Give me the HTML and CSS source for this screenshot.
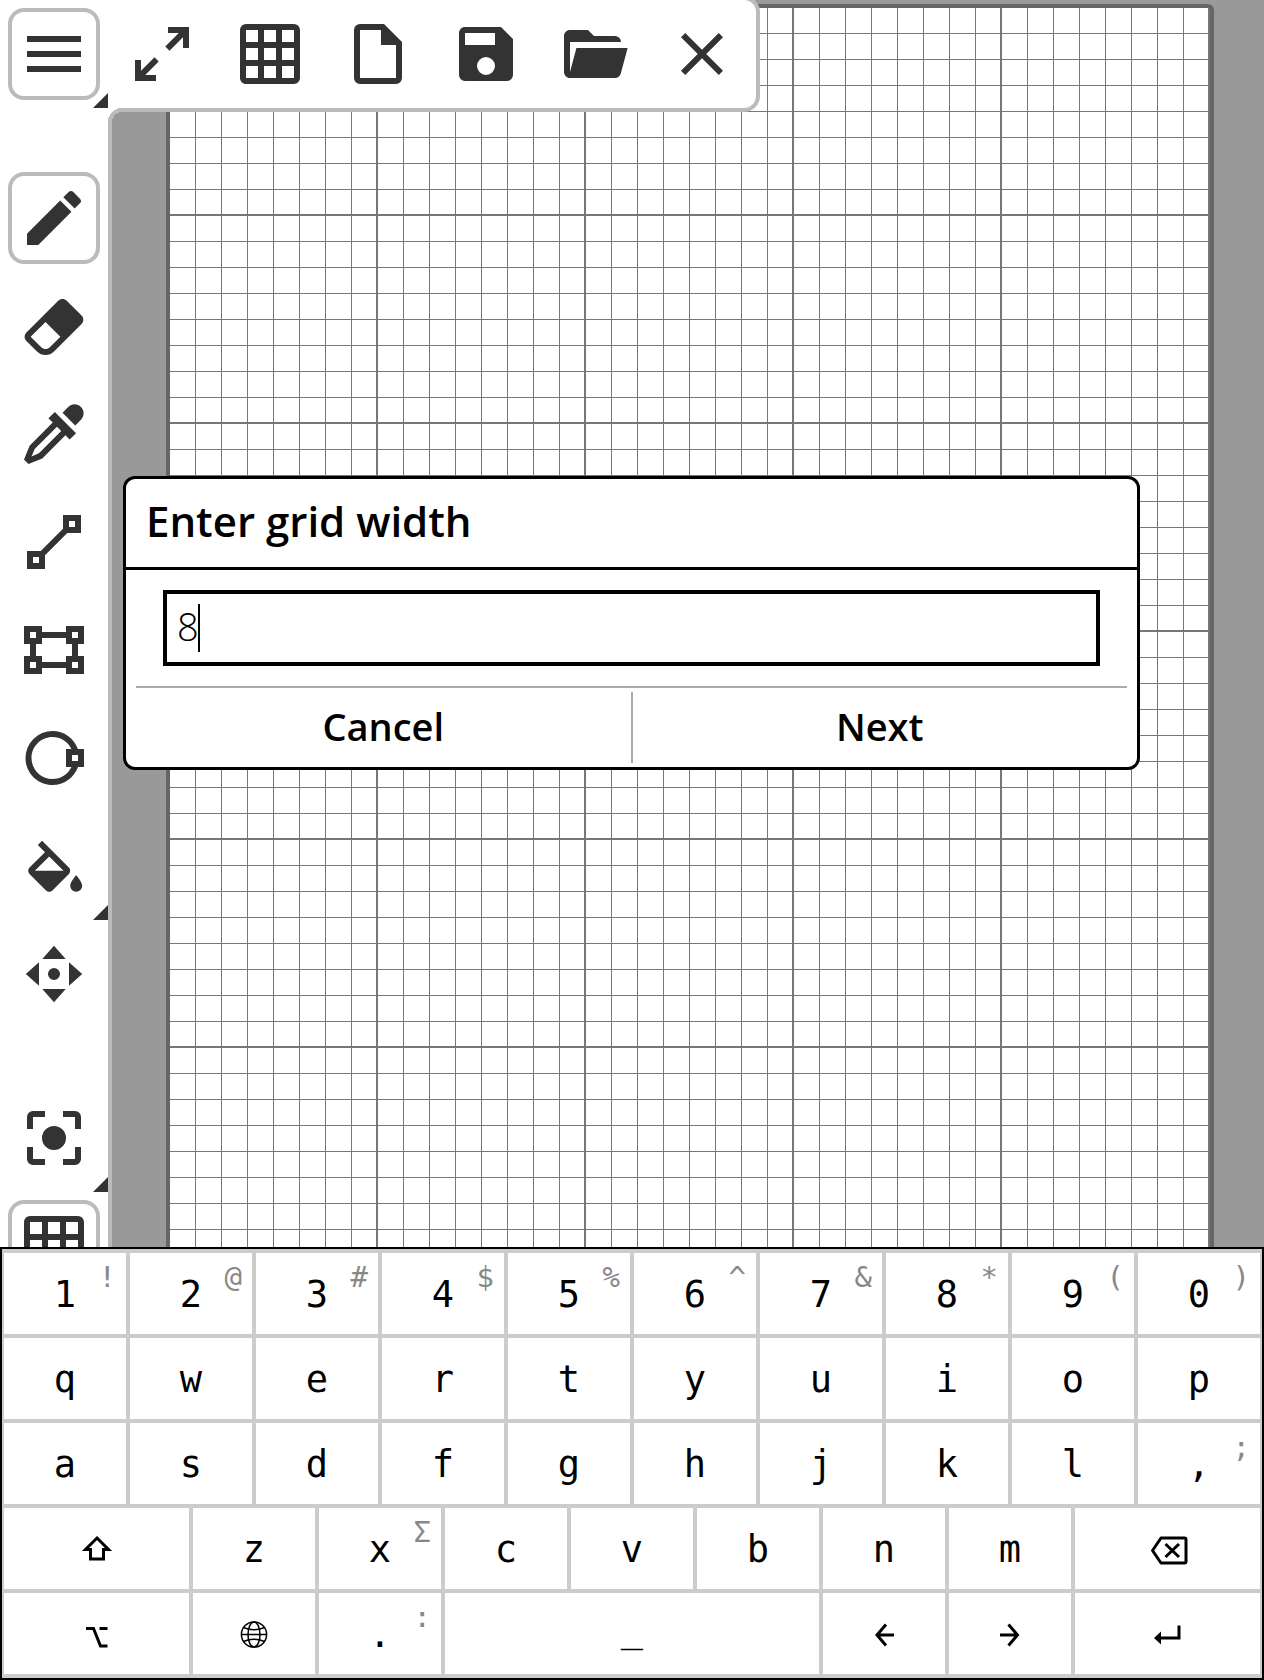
FILE: index.html
```html
<!DOCTYPE html>
<html lang="en">
<head>
<meta charset="utf-8">
<meta name="viewport" content="width=device-width, initial-scale=1">
<title>Pixel editor</title>
<link rel="stylesheet" href="styles.css">
</head>
<body>
<div class="app">
  <main class="workspace">
    <nav class="sidebar" aria-label="Tools">
      <button class="tool boxed more" aria-label="Menu"><svg class="icon" viewBox="0 0 24 24"><path d="M3,6H21V8H3V6M3,11H21V13H3V11M3,16H21V18H3V16Z"/></svg></button>
      <div class="group">
        <button class="tool boxed" aria-label="Pencil"><svg class="icon" viewBox="0 0 24 24"><path d="M20.71,7.04C21.1,6.65 21.1,6 20.71,5.63L18.37,3.29C18,2.9 17.35,2.9 16.96,3.29L15.12,5.12L18.87,8.87M3,17.25V21H6.75L17.81,9.93L14.06,6.18L3,17.25Z"/></svg></button>
        <button class="tool" aria-label="Eraser"><svg class="icon" viewBox="0 0 24 24"><path d="M16.24,3.56L21.19,8.5C21.97,9.29 21.97,10.55 21.19,11.34L12,20.53C10.44,22.09 7.91,22.09 6.34,20.53L2.81,17C2.03,16.21 2.03,14.95 2.81,14.16L13.41,3.56C14.2,2.78 15.46,2.78 16.24,3.56M4.22,15.58L7.76,19.11C8.54,19.9 9.8,19.9 10.59,19.11L14.12,15.58L9.17,10.63L4.22,15.58Z"/></svg></button>
        <button class="tool" aria-label="Colour picker"><svg class="icon" viewBox="0 0 24 24"><path d="M19.35,11.72L17.22,13.85L15.81,12.43L8.1,20.14L3.5,22L2,20.5L3.86,15.9L11.57,8.19L10.15,6.78L12.28,4.65L19.35,11.72M16.76,3C17.93,1.83 19.83,1.83 21,3C22.17,4.17 22.17,6.07 21,7.24L19.08,9.16L14.84,4.92L16.76,3M5.56,17.03L4.5,19.5L6.97,18.44L14.4,11L13,9.6L5.56,17.03Z"/></svg></button>
        <button class="tool" aria-label="Line"><svg class="icon" viewBox="0 0 24 24"><path d="M15,3V7.59L7.59,15H3V21H9V16.42L16.42,9H21V3M17,5H19V7H17M5,17H7V19H5"/></svg></button>
        <button class="tool" aria-label="Rectangle"><svg class="icon" viewBox="0 0 24 24"><path d="M2,4H8V6H16V4H22V10H20V14H22V20H16V18H8V20H2V14H4V10H2V4M16,10V8H8V10H6V14H8V16H16V14H18V10H16M4,6V8H6V6H4M18,6V8H20V6H18M4,16V18H6V16H4M18,16V18H20V16H18Z"/></svg></button>
        <button class="tool" aria-label="Circle"><svg class="icon" viewBox="0 0 24 24"><path d="M22,9H19.97C18.7,5.41 15.31,3 11.5,3A9,9 0 0,0 2.5,12C2.5,17 6.53,21 11.5,21C15.31,21 18.7,18.6 20,15H22M20,11V13H18V11M17.82,15C16.66,17.44 14.2,19 11.5,19C7.64,19 4.5,15.87 4.5,12C4.5,8.14 7.64,5 11.5,5C14.2,5 16.66,6.57 17.81,9H16V15"/></svg></button>
        <button class="tool more" aria-label="Fill"><svg class="icon" viewBox="0 0 24 24"><path transform="translate(.4 3.6)" d="M19,11.5C19,11.5 17,13.67 17,15A2,2 0 0,0 19,17A2,2 0 0,0 21,15C21,13.67 19,11.5 19,11.5M5.21,10L10,5.21L14.79,10M16.56,8.94L7.62,0L6.21,1.41L8.59,3.79L3.44,8.94C2.85,9.5 2.85,10.47 3.44,11.06L8.94,16.56C9.23,16.85 9.62,17 10,17C10.38,17 10.77,16.85 11.06,16.56L16.56,11.06C17.15,10.47 17.15,9.5 16.56,8.94Z"/></svg></button>
        <button class="tool" aria-label="Move"><svg class="icon" viewBox="0 0 24 24"><path d="M12,2.6L15.9,7H8.1ZM12,21.4L8.1,17H15.9ZM2.6,12L7,8.1V15.9ZM21.4,12L17,15.9V8.1ZM12,10A2,2 0 0,1 12,14A2,2 0 0,1 12,10Z"/></svg></button>
      </div>
      <div class="group">
        <button class="tool more" aria-label="Centre view"><svg class="icon" viewBox="0 0 24 24"><path d="M12,8A4,4 0 0,1 12,16A4,4 0 0,1 12,8M5,15H3V19A2,2 0 0,0 5,21H9V19H5M5,5H9V3H5A2,2 0 0,0 3,5V9H5M19,3H15V5H19V9H21V5A2,2 0 0,0 19,3M19,19H15V21H19A2,2 0 0,0 21,19V15H19"/></svg></button>
        <button class="tool boxed" aria-label="Show grid"><svg class="icon" viewBox="0 0 24 24"><path d="M10,4V8H14V4H10M16,4V8H20V4H16M16,10V14H20V10H16M16,16V20H20V16H16M14,20V16H10V20H14M8,20V16H4V20H8M8,14V10H4V14H8M8,8V4H4V8H8M10,14H14V10H10V14M4,2H20A2,2 0 0,1 22,4V20A2,2 0 0,1 20,22H4C2.92,22 2,21.1 2,20V4A2,2 0 0,1 4,2Z"/></svg></button>
      </div>
    </nav>
    <section class="stage" aria-label="Canvas"><div class="sheet"></div></section>

    <div class="toolbar" role="toolbar" aria-label="File">
      <button class="tool" aria-label="Resize"><svg class="icon" viewBox="0 0 24 24"><path d="M10,21V19H6.41L10.91,14.5L9.5,13.09L5,17.59V14H3V21H10M14.5,10.91L19,6.41V10H21V3H14V5H17.59L13.09,9.5L14.5,10.91Z"/></svg></button>
      <button class="tool" aria-label="Grid size"><svg class="icon" viewBox="0 0 24 24"><path d="M10,4V8H14V4H10M16,4V8H20V4H16M16,10V14H20V10H16M16,16V20H20V16H16M14,20V16H10V20H14M8,20V16H4V20H8M8,14V10H4V14H8M8,8V4H4V8H8M10,14H14V10H10V14M4,2H20A2,2 0 0,1 22,4V20A2,2 0 0,1 20,22H4C2.92,22 2,21.1 2,20V4A2,2 0 0,1 4,2Z"/></svg></button>
      <button class="tool" aria-label="New"><svg class="icon" viewBox="0 0 24 24"><path d="M6,2A2,2 0 0,0 4,4V20A2,2 0 0,0 6,22H18A2,2 0 0,0 20,20V8L14,2H6M6,4H13V9H18V20H6V4Z"/></svg></button>
      <button class="tool" aria-label="Save"><svg class="icon" viewBox="0 0 24 24"><path d="M15,9H5V5H15M12,19A3,3 0 0,1 9,16A3,3 0 0,1 12,13A3,3 0 0,1 15,16A3,3 0 0,1 12,19M17,3H5C3.89,3 3,3.9 3,5V19A2,2 0 0,0 5,21H19A2,2 0 0,0 21,19V7L17,3Z"/></svg></button>
      <button class="tool" aria-label="Open"><svg class="icon" viewBox="0 0 24 24"><path d="M19,20H4C2.89,20 2,19.1 2,18V6C2,4.89 2.89,4 4,4H10L12,6H19A2,2 0 0,1 21,8H21L4,8V18L6.14,10H23.21L20.93,18.5C20.7,19.37 19.92,20 19,20Z"/></svg></button>
      <button class="tool" aria-label="Close"><svg class="icon" viewBox="0 0 24 24"><path d="M19,6.41L17.59,5L12,10.59L6.41,5L5,6.41L10.59,12L5,17.59L6.41,19L12,13.41L17.59,19L19,17.59L13.41,12L19,6.41Z"/></svg></button>
    </div>

    <div class="overlay">
      <form class="prompt" role="dialog" aria-labelledby="prompt-title">
        <h1 class="prompt-title"><label id="prompt-title" for="grid-width">Enter grid width</label></h1>
        <div class="field">
          <input class="field-input" id="grid-width" type="text" inputmode="numeric" value="8">
          <span class="caret"></span>
        </div>
        <div class="actions">
          <button class="action" type="button">Cancel</button>
          <button class="action" type="button">Next</button>
        </div>
      </form>
    </div>
  </main>

  <section class="keyboard" aria-label="Keyboard">
    <button class="key">1<span class="hint">!</span></button>
    <button class="key">2<span class="hint">@</span></button>
    <button class="key">3<span class="hint">#</span></button>
    <button class="key">4<span class="hint">$</span></button>
    <button class="key">5<span class="hint">%</span></button>
    <button class="key">6<span class="hint">^</span></button>
    <button class="key">7<span class="hint">&amp;</span></button>
    <button class="key">8<span class="hint">*</span></button>
    <button class="key">9<span class="hint">(</span></button>
    <button class="key">0<span class="hint">)</span></button>
    <button class="key">q</button>
    <button class="key">w</button>
    <button class="key">e</button>
    <button class="key">r</button>
    <button class="key">t</button>
    <button class="key">y</button>
    <button class="key">u</button>
    <button class="key">i</button>
    <button class="key">o</button>
    <button class="key">p</button>
    <button class="key">a</button>
    <button class="key">s</button>
    <button class="key">d</button>
    <button class="key">f</button>
    <button class="key">g</button>
    <button class="key">h</button>
    <button class="key">j</button>
    <button class="key">k</button>
    <button class="key">l</button>
    <button class="key">,<span class="hint">;</span></button>
    <button class="key wide" aria-label="Shift"><svg class="glyph" viewBox="0 0 40 40"><path d="M20 9L31.5 20.5H26.5V30H13.5V20.5H8.5Z"/></svg></button>
    <button class="key">z</button>
    <button class="key">x<span class="hint">Σ</span></button>
    <button class="key">c</button>
    <button class="key">v</button>
    <button class="key">b</button>
    <button class="key">n</button>
    <button class="key">m</button>
    <button class="key wide" aria-label="Backspace"><svg class="glyph" viewBox="0 0 40 40"><path stroke-linejoin="round" d="M13 9H36.5Q38 9 38 10.500V32.500Q38 34 36.500 34H13L4.500 21.500ZM17.500 15L31 28M31 15L17.500 28"/></svg></button>
    <button class="key wide" aria-label="Option"><svg class="glyph" viewBox="0 0 40 40"><path d="M9 14.500H16.500L23.500 32H30.500M22.500 14.500H30.500"/></svg></button>
    <button class="key" aria-label="Language"><svg class="glyph thin" viewBox="0 0 40 40"><circle cx="20" cy="20.500" r="12.600"/><ellipse cx="20" cy="20.500" rx="6" ry="12.600"/><path d="M7 20.500H33M9.500 13.500Q20 18 30.500 13.500M9.500 27.500Q20 23 30.500 27.500"/></svg></button>
    <button class="key">.<span class="hint">:</span></button>
    <button class="key space" aria-label="Space">_</button>
    <button class="key" aria-label="Left"><svg class="glyph" viewBox="0 0 40 40"><path d="M30 21H13M22 10.500L13 21L22 31.500"/></svg></button>
    <button class="key" aria-label="Right"><svg class="glyph" viewBox="0 0 40 40"><path d="M10 21H27M18.500 10.500L27.500 21L18.500 31.500"/></svg></button>
    <button class="key wide" aria-label="Enter"><svg class="glyph" viewBox="0 0 40 40"><path d="M31 11.500V24H11"/><path class="solid" d="M6 24L13 17.500V30.500Z"/></svg></button>
  </section>
</div>
</body>
</html>
```
FILE: styles.css
```css
* {
  box-sizing: border-box;
}

body {
  margin: 0;
  font-family: "Open Sans", Lato, sans-serif;
  color: #000;
  background: #fff;
}

button {
  margin: 0;
  padding: 0;
  border: 0;
  border-radius: 0;
  background: #fff;
  color: inherit;
  font: inherit;
}

.app {
  display: flex;
  flex-direction: column;
  height: 100vh;
}

.workspace {
  position: relative;
  display: flex;
  flex: 1;
  min-height: 0;
  overflow: hidden;
}

/* Tools */
.sidebar {
  display: flex;
  flex-direction: column;
  flex: none;
  gap: 56px;
  border-right: 4px solid #bbb;
  background: #fff;
}

.group {
  display: flex;
  flex-direction: column;
}

.tool {
  position: relative;
  display: grid;
  place-items: center;
  flex: none;
  width: 108px;
  height: 108px;
  background: transparent;
}

.boxed::before {
  content: "";
  position: absolute;
  inset: 8px;
  border: 4px solid #bbb;
  border-radius: 16px;
}

.more::after {
  content: "";
  position: absolute;
  right: 0;
  bottom: 0;
  width: 15px;
  height: 15px;
  background: #333;
  clip-path: polygon(100% 0, 100% 100%, 0 100%);
}

.icon {
  width: 72px;
  height: 72px;
  fill: #333;
  fill-rule: evenodd;
}

.toolbar {
  position: absolute;
  top: -4px;
  left: 108px;
  display: flex;
  border: 4px solid #bbb;
  border-left: 0;
  border-radius: 0 16px 16px 0;
  background: #fff;
}

/* Concave corner where the toolbar meets the sidebar */
.toolbar::after {
  content: "";
  position: absolute;
  left: 0;
  top: 108px;
  width: 14px;
  height: 14px;
  background: radial-gradient(circle at 100% 100%, transparent 10px, #bbb 10px 14px, #fff 14px);
}

.stage {
  display: flex;
  flex: 1;
  padding: 4px 50px 0 54px;
  background: #999;
}

.sheet {
  flex: 1;
  border: 4px solid #666;
  border-bottom: 0;
  border-radius: 6px 6px 0 0;
  background-color: #fff;
  background-image:
    linear-gradient(to right, transparent 206px, #777 206px),
    linear-gradient(to bottom, transparent 206px, #777 206px),
    linear-gradient(to right, transparent 25px, #777 25px),
    linear-gradient(to bottom, transparent 25px, #777 25px);
  background-size: 208px 208px, 208px 208px, 26px 26px, 26px 26px;
}

/* Prompt */
.overlay {
  position: absolute;
  inset: 0;
  display: grid;
  align-items: center;
  padding: 0 124px 1px 123px;
}

.prompt {
  border: 3px solid #000;
  border-radius: 12px;
  background: #fff;
}

.prompt-title {
  margin: 0;
  padding: 18px 20px 22px;
  border-bottom: 3px solid #000;
  font-size: 42px;
  line-height: 48px;
  font-weight: 600;
}

.field {
  position: relative;
  margin: 20px 37px;
}

.field-input {
  display: block;
  width: 100%;
  height: 76px;
  padding: 0 10px 4px;
  border: 4px solid #000;
  border-radius: 0;
  outline: 0;
  background: #fff;
  color: #000;
  font: 300 38px/48px "Open Sans", sans-serif;
}

.caret {
  position: absolute;
  left: 35px;
  top: 14px;
  width: 2px;
  height: 48px;
  background: #000;
}

.actions {
  display: flex;
  margin: 0 10px;
  padding: 4px 0;
  border-top: 2px solid #aaa;
}

.action {
  flex: 1;
  height: 71px;
  padding-bottom: 4px;
  font-size: 38px;
  line-height: 48px;
  font-weight: 600;
}

.action + .action {
  border-left: 2px solid #aaa;
}

/* Keyboard */
.keyboard {
  display: grid;
  grid-template-columns: repeat(20, 1fr);
  grid-auto-rows: 85px;
  flex: none;
  padding: 2px 0;
  border: 2px solid #000;
  background: #ccc;
  font-family: "DejaVu Sans Mono", monospace;
  font-size: 37px;
}

.key {
  position: relative;
  display: grid;
  place-items: center;
  grid-column: span 2;
  padding-top: 2px;
  border: 2px solid #ccc;
}

.key.wide {
  grid-column: span 3;
}

.key.space {
  grid-column: span 6;
  padding-bottom: 12px;
}

.hint {
  position: absolute;
  top: 8px;
  right: 10px;
  color: #888;
  font-size: 29px;
  line-height: 32px;
}

.glyph {
  width: 40px;
  height: 40px;
  margin-top: -2px;
  fill: none;
  stroke: #000;
  stroke-width: 3;
}

.glyph.thin {
  stroke-width: 1.5;
}

.glyph .solid {
  fill: #000;
  stroke: none;
}
```
